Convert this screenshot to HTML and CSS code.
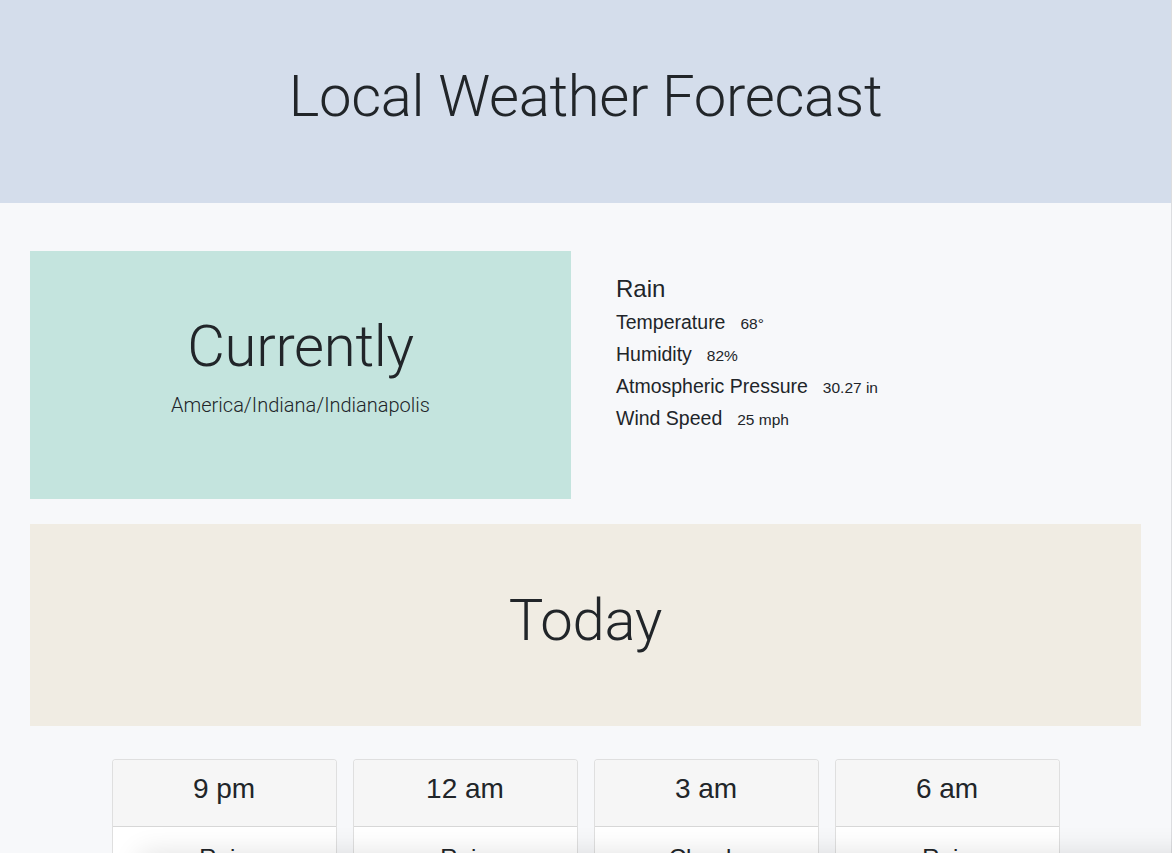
FILE: index.html
```html
<!DOCTYPE html>
<html lang="en">
<head>
<meta charset="utf-8">
<title>Local Weather Forecast</title>
<link rel="stylesheet" href="styles.css">
</head>
<body>
<header class="site-header">
  <h1 class="display">Local Weather Forecast</h1>
</header>
<main class="main">
  <section class="current-row">
    <div class="current-box">
      <h2 class="display">Currently</h2>
      <p class="lead">America/Indiana/Indianapolis</p>
    </div>
    <div class="details">
      <div class="summary">Rain</div>
      <div class="detail">Temperature<span class="val">68°</span></div>
      <div class="detail">Humidity<span class="val">82%</span></div>
      <div class="detail">Atmospheric Pressure<span class="val">30.27 in</span></div>
      <div class="detail">Wind Speed<span class="val">25 mph</span></div>
    </div>
  </section>
  <section class="today-box">
    <h2 class="display">Today</h2>
  </section>
  <section class="cards">
    <div class="card">
      <div class="card-header"><h3>9 pm</h3></div>
      <div class="card-body"><h4>Rain</h4><p>68°</p></div>
    </div>
    <div class="card">
      <div class="card-header"><h3>12 am</h3></div>
      <div class="card-body"><h4>Rain</h4><p>66°</p></div>
    </div>
    <div class="card">
      <div class="card-header"><h3>3 am</h3></div>
      <div class="card-body"><h4>Cloudy</h4><p>64°</p></div>
    </div>
    <div class="card">
      <div class="card-header"><h3>6 am</h3></div>
      <div class="card-body"><h4>Rain</h4><p>63°</p></div>
    </div>
  </section>
</main>
<div class="bottom-shade"></div>
</body>
</html>
```
FILE: styles.css
```css
html, body {
  margin: 0;
  padding: 0;
}
body {
  background: #f7f8fa;
  color: #212529;
  font-family: "Liberation Sans", Arial, Helvetica, sans-serif;
  border-right: 1px solid #dcdde0;
  min-height: 100vh;
}
.display {
  font-family: Roboto, "Liberation Sans", sans-serif;
  font-weight: 300;
  font-size: 58px;
  letter-spacing: -0.3px;
  line-height: 1.2;
  margin: 0;
}
.site-header {
  background: #d4ddeb;
  height: 203px;
  box-sizing: border-box;
  padding-bottom: 10px;
  display: flex;
  align-items: center;
  justify-content: center;
}
.main {
  padding: 48px 30px 200px 30px;
}
.current-row {
  display: grid;
  grid-template-columns: 541px 1fr;
  height: 248px;
}
.current-box {
  background: #c4e4de;
  display: flex;
  flex-direction: column;
  align-items: center;
  justify-content: center;
  padding-bottom: 18px;
  box-sizing: border-box;
}
.lead {
  font-family: Roboto, "Liberation Sans", sans-serif;
  font-weight: 300;
  font-size: 20px;
  line-height: 30px;
  margin: 8px 0 0;
}
.details {
  padding: 24px 0 0 45px;
}
.summary {
  font-size: 24px;
  line-height: 1.2;
  margin-bottom: 2px;
}
.detail {
  font-size: 19.5px;
  line-height: 32px;
}
.val {
  font-size: 15.5px;
  line-height: 1;
  margin-left: 15px;
}
.today-box {
  background: #f0ece3;
  height: 202px;
  margin-top: 25px;
  display: flex;
  align-items: center;
  justify-content: center;
  padding-bottom: 9px;
  box-sizing: border-box;
}
.cards {
  margin-top: 33px;
  display: grid;
  grid-template-columns: repeat(4, 225px);
  gap: 16px;
  justify-content: center;
}
.card {
  background: #fff;
  border: 1px solid rgba(0, 0, 0, 0.125);
  border-radius: 4px;
  overflow: hidden;
}
.card-header {
  background: #f6f6f6;
  border-bottom: 1px solid rgba(0, 0, 0, 0.125);
  padding: 12px 20px;
  text-align: center;
}
.card-header h3 {
  font-size: 28px;
  font-weight: 400;
  line-height: 1.2;
  margin: 0 0 8px;
}
.card-body {
  padding: 17px 20px 20px;
  text-align: center;
}
.card-body h4 {
  font-size: 24px;
  font-weight: 400;
  line-height: 1.2;
  margin: 0 0 8px;
}
.card-body p {
  margin: 0;
  font-size: 16px;
}
.bottom-shade {
  position: fixed;
  left: 140px;
  right: -40px;
  bottom: -60px;
  height: 60px;
  background: #fff;
  box-shadow: 0 0 28px rgba(0, 0, 0, 0.12);
}
```
